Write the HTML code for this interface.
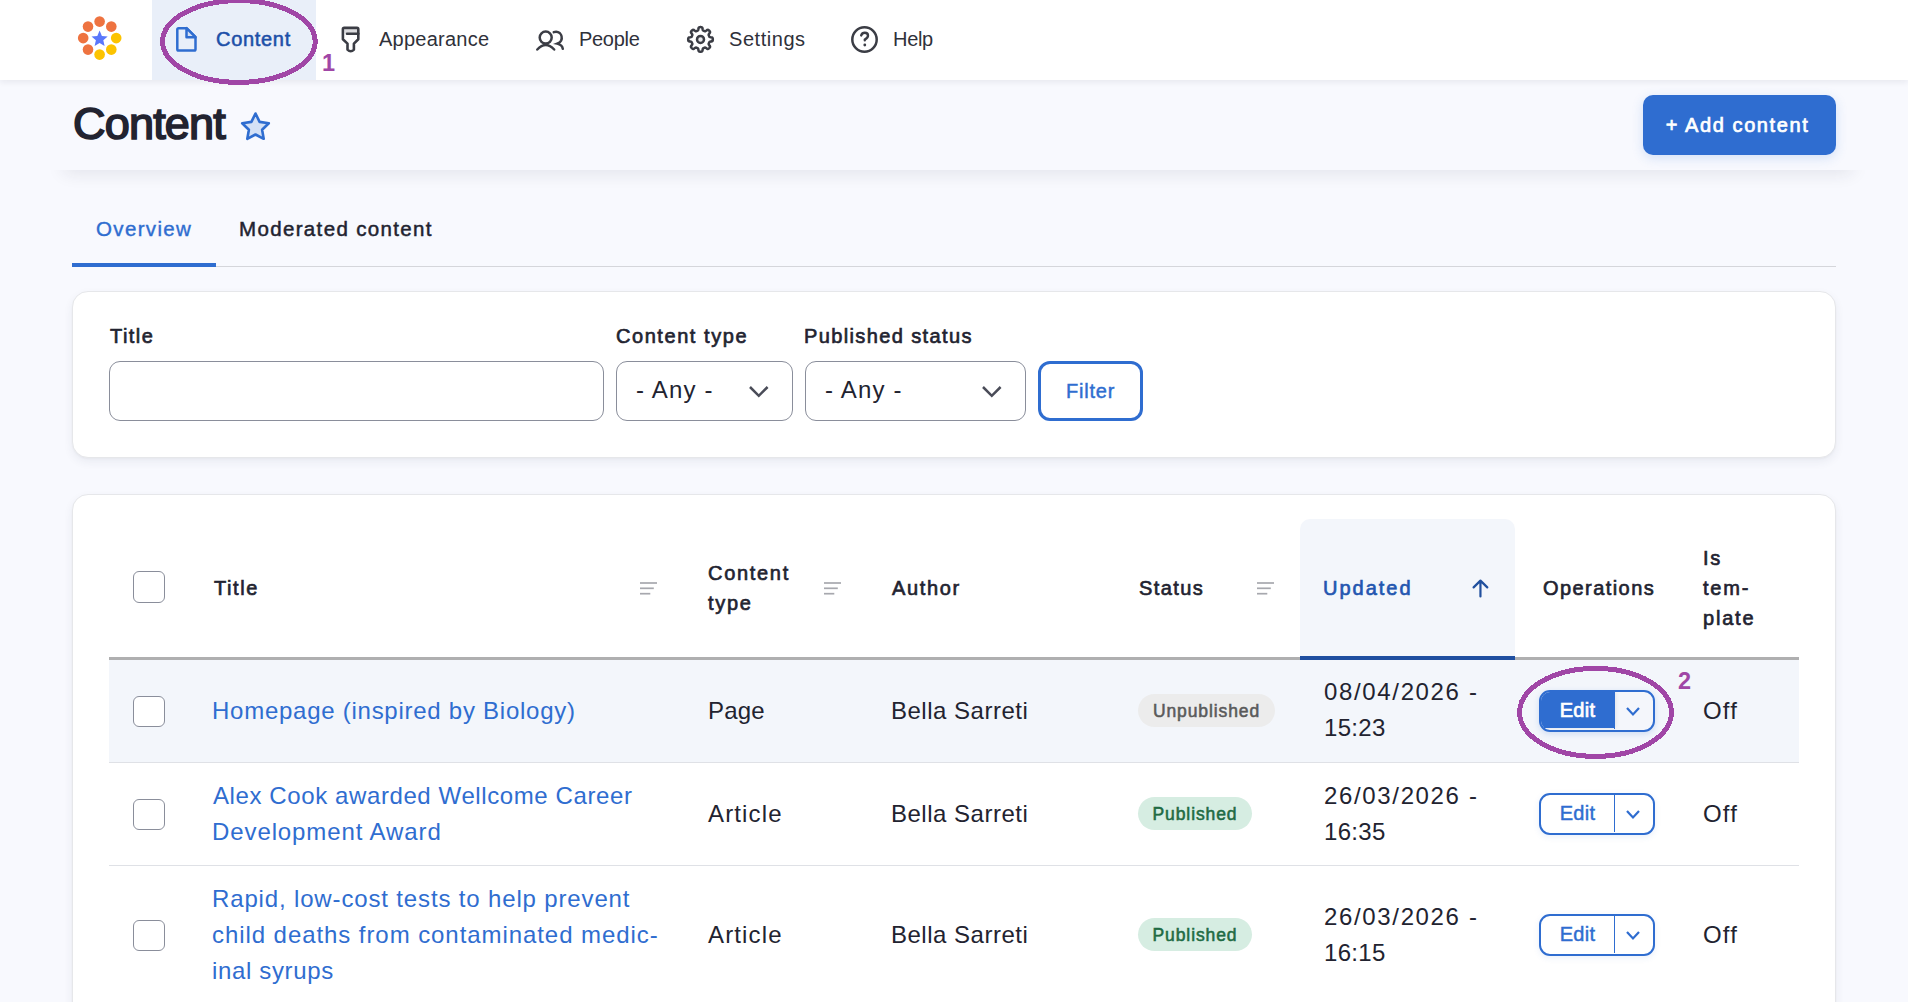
<!DOCTYPE html>
<html><head><meta charset="utf-8">
<style>
*{box-sizing:border-box;margin:0;padding:0}
html,body{width:1908px;height:1002px;overflow:hidden}
body{background:#f8f9fe;font-family:"Liberation Sans",sans-serif;color:#222330;position:relative}
.a{position:absolute;white-space:nowrap}
.t20{font-size:20px;line-height:30px}
.t24{font-size:24px;line-height:36px}
.b{font-weight:700}
.sb{font-weight:400;-webkit-text-stroke:0.65px currentColor}
svg{position:absolute;overflow:visible}
/* nav */
#nav{position:absolute;left:0;top:0;width:1908px;height:80px;background:#fff;box-shadow:0 2px 8px rgba(20,25,50,.08)}
.navt{color:#2f313a;top:24px}
/* header */
#hdr{position:absolute;left:0;top:80px;width:1908px;height:90px;background:#f8f9fe}
#nav2{position:absolute;left:0;top:72px;width:1908px;height:8px;background:transparent;box-shadow:0 2px 6px rgba(20,25,50,.08);clip-path:inset(8px 0 -20px 0)}
#hdrsh{position:absolute;left:56px;top:140px;width:1804px;height:30px;box-shadow:0 10px 18px -8px rgba(30,35,60,.12)}
.card{position:absolute;background:#fff;border:1px solid #e6e7ea;border-radius:16px;box-shadow:0 4px 10px rgba(40,50,90,.07),0 1px 2px rgba(0,0,0,.03)}
.inp{position:absolute;border:1px solid #8a8e9b;border-radius:11px;background:#fff;height:60px;top:361px}
.lbl{top:321px}
.sorti line{stroke:#a7a8ae;stroke-width:1.7}
.row{position:absolute;left:109px;width:1690px}
.cb{position:absolute;left:133px;width:32px;height:32px;border:1px solid #8a8e9b;border-radius:6px;background:#fff}
.link{color:#2f6dd0}
.badge{position:absolute;left:1138px;height:33px;border-radius:17px;font-size:17.5px;font-weight:400;-webkit-text-stroke:0.55px currentColor;letter-spacing:0.9px;line-height:35px;text-align:center}
.unpub{background:#ececec;color:#5a5a5a;width:137px}
.pub{background:#d6ede2;color:#1f6b44;width:114px}
.editb{position:absolute;left:1539px;width:116px;height:42px;border:2.8px solid #2f6dd0;border-radius:11px;background:#fff;overflow:hidden;box-shadow:0 2px 6px rgba(47,109,208,.1)}
.editb .e{position:absolute;left:0;top:0;width:73px;height:36.4px;font-size:20px;line-height:36.4px;text-align:center;color:#2f6dd0;font-weight:400;-webkit-text-stroke:0.45px currentColor;letter-spacing:0.3px}
.editb .d{position:absolute;left:73px;top:0;width:1.4px;height:37px;background:#2f6dd0}
</style></head><body>

<!-- NAV -->
<div id="nav"></div>
<div class="a" style="left:152px;top:0;width:164px;height:80px;background:#e9eff9"></div>

<!-- logo -->
<svg style="left:0;top:0" width="200" height="80">
 <circle cx="99.6" cy="21.6" r="5.3" fill="#ee7340"/>
 <circle cx="88" cy="26.6" r="5.3" fill="#ee7340"/>
 <circle cx="111.3" cy="26.6" r="5.3" fill="#ee7340"/>
 <circle cx="83.2" cy="38.1" r="5.3" fill="#ee7340"/>
 <circle cx="88" cy="49.6" r="5.3" fill="#ee7340"/>
 <circle cx="116.2" cy="38.1" r="5.3" fill="#fcc300"/>
 <circle cx="111.3" cy="49.6" r="5.3" fill="#fcc300"/>
 <circle cx="99.6" cy="54.6" r="5.3" fill="#fcc300"/>
 <polygon fill="#5a77fb" points="99.60,30.60 101.89,35.94 107.68,36.47 103.31,40.31 104.60,45.98 99.60,43.00 94.60,45.98 95.89,40.31 91.52,36.47 97.31,35.94"/>
</svg>

<!-- doc icon -->
<svg style="left:0;top:0" width="1" height="1">
 <path d="M186.5 28.2 L178.6 28.2 Q177.3 28.2 177.3 29.5 L177.3 49.2 Q177.3 50.5 178.6 50.5 L194.2 50.5 Q195.5 50.5 195.5 49.2 L195.5 37.2 Z" fill="none" stroke="#2f6dd0" stroke-width="2.5" stroke-linejoin="round"/>
 <path d="M186.5 28.2 L186.5 37.2 L195.5 37.2 Z" fill="#d3dff5" stroke="#2f6dd0" stroke-width="2.5" stroke-linejoin="round"/>
</svg>
<div class="a t20" style="left:216px;top:24px;color:#1d4fa8;letter-spacing:0.7px;-webkit-text-stroke:0.55px #1d4fa8">Content</div>

<!-- brush icon -->
<svg style="left:0;top:0" width="1" height="1">
 <rect x="344.5" y="29.2" width="12.6" height="4" fill="#dcdcdf"/>
 <path d="M342.9 39.3 L342.9 29.2 Q342.9 27.9 344.2 27.9 L357 27.9 Q358.3 27.9 358.3 29.2 L358.3 39.3 L353.9 43.6 L353.9 49.6 Q350.7 53 347.5 49.6 L347.5 43.6 Z" fill="none" stroke="#3b3d45" stroke-width="2.6" stroke-linejoin="round"/>
 <path d="M347 33.7 L358.3 33.7" fill="none" stroke="#3b3d45" stroke-width="2.6" stroke-linecap="round"/>
</svg>
<div class="a t20 navt" style="left:379px;letter-spacing:0.25px">Appearance</div>

<!-- people icon -->
<svg style="left:0;top:0" width="1" height="1">
 <circle cx="545.7" cy="37.6" r="6" fill="none" stroke="#3b3d45" stroke-width="2.5"/>
 <path d="M537.3 49.5 Q545.7 40.5 554.2 49.5" fill="none" stroke="#3b3d45" stroke-width="2.5" stroke-linecap="round"/>
 <path d="M553.8 32.2 Q557 31 559.7 33 Q562.8 36.2 561.2 40.4 Q560.3 42.4 557.2 43.6 Q562.3 44.8 562.8 48.8" fill="none" stroke="#3b3d45" stroke-width="2.5" stroke-linecap="round"/>
</svg>
<div class="a t20 navt" style="left:579px;letter-spacing:-0.3px">People</div>

<!-- gear icon -->
<svg style="left:0;top:0" width="1" height="1"><path d="M700.50 27.10 L700.82 27.11 L701.14 27.13 L701.46 27.18 L701.78 27.26 L702.07 27.44 L702.34 27.80 L702.53 28.45 L702.65 29.26 L702.78 29.91 L702.94 30.29 L703.14 30.49 L703.35 30.61 L703.58 30.72 L703.80 30.81 L704.02 30.90 L704.24 30.99 L704.47 31.08 L704.69 31.17 L704.94 31.23 L705.22 31.23 L705.60 31.08 L706.14 30.71 L706.81 30.22 L707.40 29.90 L707.84 29.83 L708.18 29.92 L708.46 30.08 L708.72 30.27 L708.96 30.48 L709.20 30.70 L709.42 30.94 L709.63 31.18 L709.82 31.44 L709.98 31.72 L710.07 32.06 L710.00 32.50 L709.68 33.09 L709.19 33.76 L708.82 34.30 L708.67 34.68 L708.67 34.96 L708.73 35.21 L708.82 35.43 L708.91 35.66 L709.00 35.88 L709.09 36.10 L709.18 36.32 L709.29 36.55 L709.41 36.76 L709.61 36.96 L709.99 37.12 L710.64 37.25 L711.45 37.37 L712.10 37.56 L712.46 37.83 L712.64 38.12 L712.72 38.44 L712.77 38.76 L712.79 39.08 L712.80 39.40 L712.79 39.72 L712.77 40.04 L712.72 40.36 L712.64 40.68 L712.46 40.97 L712.10 41.24 L711.45 41.43 L710.64 41.55 L709.99 41.68 L709.61 41.84 L709.41 42.04 L709.29 42.25 L709.18 42.48 L709.09 42.70 L709.00 42.92 L708.91 43.14 L708.82 43.37 L708.73 43.59 L708.67 43.84 L708.67 44.12 L708.82 44.50 L709.19 45.04 L709.68 45.71 L710.00 46.30 L710.07 46.74 L709.98 47.08 L709.82 47.36 L709.63 47.62 L709.42 47.86 L709.20 48.10 L708.96 48.32 L708.72 48.53 L708.46 48.72 L708.18 48.88 L707.84 48.97 L707.40 48.90 L706.81 48.58 L706.14 48.09 L705.60 47.72 L705.22 47.57 L704.94 47.57 L704.69 47.63 L704.47 47.72 L704.24 47.81 L704.02 47.90 L703.80 47.99 L703.58 48.08 L703.35 48.19 L703.14 48.31 L702.94 48.51 L702.78 48.89 L702.65 49.54 L702.53 50.35 L702.34 51.00 L702.07 51.36 L701.78 51.54 L701.46 51.62 L701.14 51.67 L700.82 51.69 L700.50 51.70 L700.18 51.69 L699.86 51.67 L699.54 51.62 L699.22 51.54 L698.93 51.36 L698.66 51.00 L698.47 50.35 L698.35 49.54 L698.22 48.89 L698.06 48.51 L697.86 48.31 L697.65 48.19 L697.42 48.08 L697.20 47.99 L696.98 47.90 L696.76 47.81 L696.53 47.72 L696.31 47.63 L696.06 47.57 L695.78 47.57 L695.40 47.72 L694.86 48.09 L694.19 48.58 L693.60 48.90 L693.16 48.97 L692.82 48.88 L692.54 48.72 L692.28 48.53 L692.04 48.32 L691.80 48.10 L691.58 47.86 L691.37 47.62 L691.18 47.36 L691.02 47.08 L690.93 46.74 L691.00 46.30 L691.32 45.71 L691.81 45.04 L692.18 44.50 L692.33 44.12 L692.33 43.84 L692.27 43.59 L692.18 43.37 L692.09 43.14 L692.00 42.92 L691.91 42.70 L691.82 42.48 L691.71 42.25 L691.59 42.04 L691.39 41.84 L691.01 41.68 L690.36 41.55 L689.55 41.43 L688.90 41.24 L688.54 40.97 L688.36 40.68 L688.28 40.36 L688.23 40.04 L688.21 39.72 L688.20 39.40 L688.21 39.08 L688.23 38.76 L688.28 38.44 L688.36 38.12 L688.54 37.83 L688.90 37.56 L689.55 37.37 L690.36 37.25 L691.01 37.12 L691.39 36.96 L691.59 36.76 L691.71 36.55 L691.82 36.32 L691.91 36.10 L692.00 35.88 L692.09 35.66 L692.18 35.43 L692.27 35.21 L692.33 34.96 L692.33 34.68 L692.18 34.30 L691.81 33.76 L691.32 33.09 L691.00 32.50 L690.93 32.06 L691.02 31.72 L691.18 31.44 L691.37 31.18 L691.58 30.94 L691.80 30.70 L692.04 30.48 L692.28 30.27 L692.54 30.08 L692.82 29.92 L693.16 29.83 L693.60 29.90 L694.19 30.22 L694.86 30.71 L695.40 31.08 L695.78 31.23 L696.06 31.23 L696.31 31.17 L696.53 31.08 L696.76 30.99 L696.98 30.90 L697.20 30.81 L697.42 30.72 L697.65 30.61 L697.86 30.49 L698.06 30.29 L698.22 29.91 L698.35 29.26 L698.47 28.45 L698.66 27.80 L698.93 27.44 L699.22 27.26 L699.54 27.18 L699.86 27.13 L700.18 27.11 Z" fill="none" stroke="#3b3d45" stroke-width="2.5" stroke-linejoin="round"/><circle cx="700.5" cy="39.4" r="3.5" fill="#e9e9ec" stroke="#3b3d45" stroke-width="2.5"/></svg>
<div class="a t20 navt" style="left:729px;letter-spacing:0.55px">Settings</div>

<!-- help icon -->
<svg style="left:0;top:0" width="1" height="1">
 <circle cx="864.5" cy="39.5" r="12.2" fill="none" stroke="#3b3d45" stroke-width="2.5"/>
 <path d="M861.2 35.4 Q862 32.8 864.8 32.8 Q868 32.8 868 35.8 Q868 37.8 864.8 39.6 L864.8 40.2" fill="none" stroke="#3b3d45" stroke-width="2.4" stroke-linecap="round"/>
 <circle cx="864.8" cy="45" r="1.4" fill="#3b3d45"/>
</svg>
<div class="a t20 navt" style="left:893px;letter-spacing:-0.3px">Help</div>

<!-- HEADER -->
<div id="hdrsh"></div>
<div id="hdr"></div>
<div id="nav2"></div>
<div class="a" style="left:73px;top:97px;font-size:45px;line-height:54px;letter-spacing:-0.8px;color:#222330;-webkit-text-stroke:1.7px #222330">Content</div>
<svg style="left:0;top:0" width="1" height="1">
 <polygon points="255.5,113.5 259.6,121.9 268.8,123.2 262.1,129.7 263.7,138.8 255.5,134.5 247.3,138.8 248.9,129.7 242.2,123.2 251.4,121.9" fill="#d4e1f6" stroke="#2f6dd0" stroke-width="2.6" stroke-linejoin="round"/>
</svg>
<div class="a" style="left:1643px;top:95px;width:193px;height:60px;background:#2f6dd0;border-radius:10px;box-shadow:0 3px 12px rgba(47,109,208,.18)"></div>
<div class="a t20" style="left:1641px;top:110px;width:193px;text-align:center;color:#fff;letter-spacing:1.6px;-webkit-text-stroke:0.7px #fff">+ Add content</div>

<!-- TABS -->
<div class="a" style="left:96px;top:214px;font-size:20.5px;line-height:30px;color:#2f6dd0;letter-spacing:1.35px;-webkit-text-stroke:0.4px #2f6dd0">Overview</div>
<div class="a" style="left:239px;top:214px;font-size:20.5px;line-height:30px;color:#222330;letter-spacing:1.35px;-webkit-text-stroke:0.5px #222330">Moderated content</div>
<div class="a" style="left:72px;top:266px;width:1764px;height:1px;background:#d5d6db"></div>
<div class="a" style="left:72px;top:263px;width:144px;height:4px;background:#2f6dd0"></div>

<!-- FILTER CARD -->
<div class="card" style="left:72px;top:291px;width:1764px;height:167px"></div>
<div class="a t20 sb lbl" style="left:110px;letter-spacing:1.45px">Title</div>
<div class="a t20 sb lbl" style="left:616px;letter-spacing:1.56px">Content type</div>
<div class="a t20 sb lbl" style="left:804px;letter-spacing:1.38px">Published status</div>
<div class="inp" style="left:109px;width:495px"></div>
<div class="inp" style="left:616px;width:177px"></div>
<div class="inp" style="left:805px;width:221px"></div>
<div class="a t24" style="left:636px;top:372px;letter-spacing:1.2px">- Any -</div>
<div class="a t24" style="left:825px;top:372px;letter-spacing:1.2px">- Any -</div>
<svg style="left:0;top:0" width="1" height="1">
 <path d="M750 387 L758.8 395.8 L767.6 387" fill="none" stroke="#4a4c58" stroke-width="2.5"/>
 <path d="M983 387 L991.8 395.8 L1000.6 387" fill="none" stroke="#4a4c58" stroke-width="2.5"/>
</svg>
<div class="a" style="left:1038px;top:361px;width:105px;height:60px;border:3px solid #2f6dd0;border-radius:12px;background:#fff"></div>
<div class="a t20" style="left:1038px;top:376px;width:105px;text-align:center;color:#2f6dd0;letter-spacing:0.8px;-webkit-text-stroke:0.45px #2f6dd0">Filter</div>

<!-- TABLE CARD -->
<div class="card" style="left:72px;top:494px;width:1764px;height:600px"></div>
<!-- updated header bg -->
<div class="a" style="left:1300px;top:519px;width:215px;height:141px;background:#f3f6fb;border-radius:10px 10px 0 0"></div>
<div class="a" style="left:109px;top:657px;width:1690px;height:3px;background:#afafb0"></div>
<div class="a" style="left:1300px;top:656px;width:215px;height:4px;background:#1f4fa0"></div>

<div class="cb" style="top:571px"></div>
<div class="a t20 sb" style="left:214px;top:573px;letter-spacing:1.6px">Title</div>
<div class="a t20 sb" style="left:708px;top:558px;letter-spacing:1.7px">Content<br>type</div>
<div class="a t20 sb" style="left:892px;top:573px;letter-spacing:1.66px">Author</div>
<div class="a t20 sb" style="left:1139px;top:573px;letter-spacing:1.4px">Status</div>
<div class="a t20 sb" style="left:1323px;top:573px;color:#2356b0;letter-spacing:2.0px">Updated</div>
<div class="a t20 sb" style="left:1543px;top:573px;letter-spacing:1.43px">Operations</div>
<div class="a t20 sb" style="left:1703px;top:543px;letter-spacing:1.8px">Is<br>tem-<br>plate</div>
<svg style="left:0;top:0" width="1" height="1" class="sorti">
 <line x1="640" y1="583" x2="657" y2="583"/><line x1="640" y1="588.3" x2="653.8" y2="588.3"/><line x1="640" y1="593.7" x2="650.3" y2="593.7"/>
 <line x1="824" y1="583" x2="841" y2="583"/><line x1="824" y1="588.3" x2="837.8" y2="588.3"/><line x1="824" y1="593.7" x2="834.3" y2="593.7"/>
 <line x1="1257" y1="583" x2="1274" y2="583"/><line x1="1257" y1="588.3" x2="1270.8" y2="588.3"/><line x1="1257" y1="593.7" x2="1267.3" y2="593.7"/>
 <path d="M1480.45 596.4 L1480.45 581 M1473.6 587.4 L1480.45 580.6 L1487.3 587.4" fill="none" stroke="#21509e" stroke-width="2.2" stroke-linecap="round" stroke-linejoin="round"/>
</svg>

<!-- ROW 1 -->
<div class="row" style="top:660px;height:102px;background:#f3f6fb"></div>
<div class="row" style="top:762px;height:1px;background:#dfe1e6"></div>
<div class="cb" style="top:696px;height:31px"></div>
<div class="a t24 link" style="left:212px;top:693px;letter-spacing:0.74px">Homepage (inspired by Biology)</div>
<div class="a t24" style="left:708px;top:693px;letter-spacing:0.2px">Page</div>
<div class="a t24" style="left:891px;top:693px;letter-spacing:0.5px">Bella Sarreti</div>
<div class="badge unpub" style="top:694px">Unpublished</div>
<div class="a t24" style="left:1324px;top:674px;letter-spacing:1.65px">08/04/2026 -</div><div class="a t24" style="left:1324px;top:710px;letter-spacing:0.3px">15:23</div>
<div class="editb" style="top:690px;background:#f4f6fb;box-shadow:0 2px 6px rgba(47,109,208,.18)"><div class="e" style="background:#2f6dd0;color:#fff;box-shadow:2px 0 4px rgba(0,0,0,.08);-webkit-text-stroke:0.7px #fff">Edit</div><div class="d"></div></div>
<div class="a t24" style="left:1703px;top:693px;letter-spacing:1.2px">Off</div>

<!-- ROW 2 -->
<div class="row" style="top:865px;height:1px;background:#dfe1e6"></div>
<div class="cb" style="top:799px;height:31px"></div>
<div class="a t24 link" style="left:213px;top:778px;letter-spacing:0.6px">Alex Cook awarded Wellcome Career</div><div class="a t24 link" style="left:212px;top:814px;letter-spacing:0.9px">Development Award</div>
<div class="a t24" style="left:708px;top:796px;letter-spacing:1.15px">Article</div>
<div class="a t24" style="left:891px;top:796px;letter-spacing:0.5px">Bella Sarreti</div>
<div class="badge pub" style="top:797px">Published</div>
<div class="a t24" style="left:1324px;top:778px;letter-spacing:1.65px">26/03/2026 -</div><div class="a t24" style="left:1324px;top:814px;letter-spacing:0.3px">16:35</div>
<div class="editb" style="top:793px"><div class="e">Edit</div><div class="d"></div></div>
<div class="a t24" style="left:1703px;top:796px;letter-spacing:1.2px">Off</div>

<!-- ROW 3 -->
<div class="cb" style="top:920px;height:31px"></div>
<div class="a t24 link" style="left:212px;top:881px;letter-spacing:0.85px">Rapid, low-cost tests to help prevent</div><div class="a t24 link" style="left:212px;top:917px;letter-spacing:0.93px">child deaths from contaminated medic-</div><div class="a t24 link" style="left:212px;top:953px;letter-spacing:0.65px">inal syrups</div>
<div class="a t24" style="left:708px;top:917px;letter-spacing:1.15px">Article</div>
<div class="a t24" style="left:891px;top:917px;letter-spacing:0.5px">Bella Sarreti</div>
<div class="badge pub" style="top:918px">Published</div>
<div class="a t24" style="left:1324px;top:899px;letter-spacing:1.65px">26/03/2026 -</div><div class="a t24" style="left:1324px;top:935px;letter-spacing:0.3px">16:15</div>
<div class="editb" style="top:914px"><div class="e">Edit</div><div class="d"></div></div>
<div class="a t24" style="left:1703px;top:917px;letter-spacing:1.2px">Off</div>

<!-- chevrons in edit buttons -->
<svg style="left:0;top:0" width="1" height="1">
 <path d="M1627 708 L1633 714.5 L1639 708" fill="none" stroke="#2f6dd0" stroke-width="2.2"/>
 <path d="M1627 811 L1633 817.5 L1639 811" fill="none" stroke="#2f6dd0" stroke-width="2.2"/>
 <path d="M1627 932 L1633 938.5 L1639 932" fill="none" stroke="#2f6dd0" stroke-width="2.2"/>
</svg>

<!-- ANNOTATIONS -->
<svg style="left:0;top:0" width="1" height="1">
 <ellipse cx="238.9" cy="41.5" rx="76.3" ry="40.9" fill="none" stroke="#a046a6" stroke-width="5" shape-rendering="crispEdges"/>
 <ellipse cx="1595.5" cy="712.4" rx="75.9" ry="44" fill="none" stroke="#a046a6" stroke-width="5" shape-rendering="crispEdges"/>
</svg>
<div class="a b" style="left:322px;top:49px;font-size:23.5px;line-height:28px;color:#a046a6">1</div>
<div class="a b" style="left:1678px;top:667px;font-size:23.5px;line-height:28px;color:#a046a6">2</div>

</body></html>
